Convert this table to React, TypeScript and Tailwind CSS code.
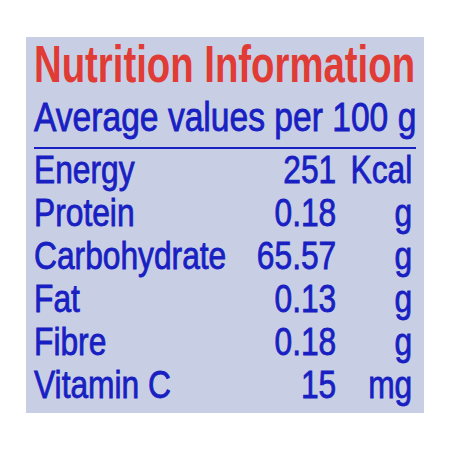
const rows = [
  { label: "Energy", value: "251", unit: "Kcal" },
  { label: "Protein", value: "0.18", unit: "g" },
  { label: "Carbohydrate", value: "65.57", unit: "g" },
  { label: "Fat", value: "0.13", unit: "g" },
  { label: "Fibre", value: "0.18", unit: "g" },
  { label: "Vitamin C", value: "15", unit: "mg" },
];

const App = () => {
  return (
    <div className="w-[450px] h-[450px] bg-white overflow-hidden pt-[37px] pl-[26px] font-['Liberation_Sans',Arial,sans-serif]">
      <div className="w-[398px] h-[376px] bg-[#c8cfe5] pl-[8px]">
        {/* Title */}
        <div className="pt-[1px] text-[52px] leading-none font-bold text-[#e13b36] whitespace-nowrap origin-left scale-x-[0.737]">
          Nutrition Information
        </div>

        <div className="mt-[7px] text-[40px] leading-none text-[#1820c2] whitespace-nowrap origin-left scale-x-[0.84] [-webkit-text-stroke:0.8px_currentColor]">
          Average values per 100 g
        </div>

        <div className="mt-[10px] w-[382px] h-[2px] bg-[#1820c2]" />

        {/* Table */}
        <div className="w-[457px] origin-left scale-x-[0.835] text-[38px] leading-[43px] text-[#1820c2] [-webkit-text-stroke:0.8px_currentColor]">
          {rows.map((row) => (
            <div key={row.label} className="flex whitespace-nowrap">
              <div className="flex-1">{row.label}</div>
              <div className="text-right">{row.value}</div>
              <div className="w-[95px] pr-[4px] text-right">{row.unit}</div>
            </div>
          ))}
        </div>
      </div>
    </div>
  );
};

export default App;
